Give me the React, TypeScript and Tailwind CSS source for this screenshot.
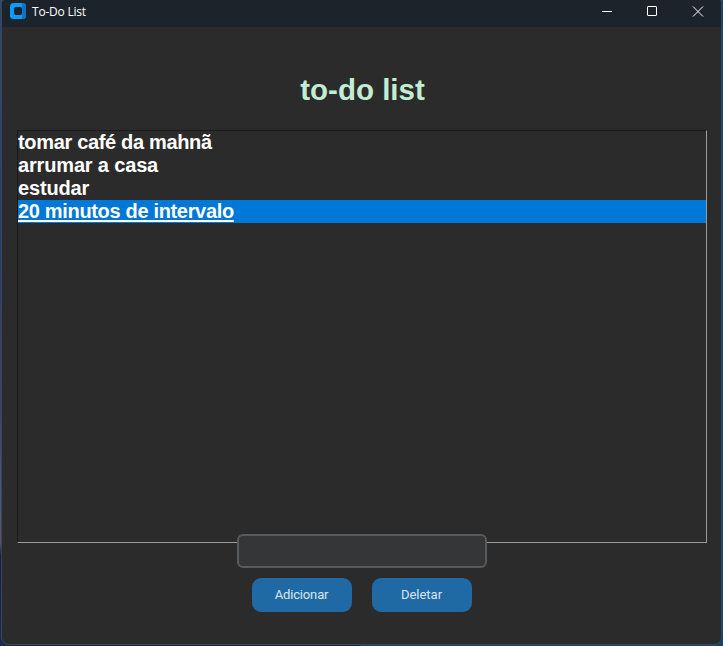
const tasks = [
  { label: "tomar café da mahnã", selected: false, spacing: "tracking-[-0.33px]" },
  { label: "arrumar a casa", selected: false, spacing: "tracking-[-0.16px]" },
  { label: "estudar", selected: false, spacing: "tracking-[-0.15px]" },
  { label: "20 minutos de intervalo", selected: true, spacing: "tracking-[-0.33px]" },
];

function TitleBar() {
  return (
    <header className="flex h-[27px] shrink-0 items-start bg-[#1c232b]">
      <svg className="mt-[3px] ml-2 shrink-0" width="16" height="16" viewBox="0 0 16 16">
        <rect width="16" height="16" rx="3.5" fill="#0a9bff" />
        <path d="M12 0h.5A3.5 3.5 0 0 1 16 3.5v9a3.5 3.5 0 0 1-3.5 3.5H12z" fill="#0874cc" />
        <rect x="4" y="4" width="8" height="8" rx="2" fill="#1c232b" />
      </svg>
      <span className="ml-[6px] pt-[3px] text-[12px] leading-[17px] tracking-[-0.22px] whitespace-nowrap text-white">To-Do List</span>
      <svg className="mr-[16px] ml-auto" width="104" height="24" viewBox="0 0 104 24" fill="none" stroke="white">
        <path d="M1 11.5h10" />
        <rect x="46.5" y="6.500" width="9" height="9" rx="0.5" />
        <path d="M92 6.500l10 10M102 6.500l-10 10" />
      </svg>
    </header>
  );
}

export default function App() {
  return (
    <div className="h-[646px] w-[723px] bg-[linear-gradient(to_right,transparent_50%,#17436a_50%),linear-gradient(to_bottom,#2c4a72_0%,#2b3c70_40%,#46406b_65%,#475c78_77%,#694d6b_84%,#171c43_86%,#1b294f_100%)] pr-px pb-px pl-px font-['Open_Sans','Noto_Sans',sans-serif]">
      <div className="flex h-[645px] flex-col overflow-hidden rounded-t-[4px] rounded-b-lg border-x border-b border-[#36475a] bg-[#2b2b2b]">
        <TitleBar />
        <main className="flex flex-col items-center px-[15px] pt-[43px]">
          <h1 className="h-[60px] pt-[1px] pl-[2px] font-['Liberation_Sans',Arial,sans-serif] text-[29.500px] leading-[38px] font-bold whitespace-nowrap text-[#c3edd2]">to-do list</h1>
          <ul className="h-[413px] w-[690px] self-start border border-t-[#191919] border-r-[#9c9c9c] border-b-[#9c9c9c] border-l-[#191919] font-['Liberation_Sans',Arial,sans-serif] text-[20px] leading-[23px] font-bold text-white">
            {tasks.map((task) => (
              <li
                key={task.label}
                className={`h-[23px] ${task.spacing} ${task.selected ? "bg-[#0078d7] underline decoration-2 underline-offset-2" : ""}`}
              >
                {task.label}
              </li>
            ))}
          </ul>
          <input className="relative -mt-[9px] h-[34px] w-[250px] rounded-md border-2 border-[#565b5e] bg-[#343638] px-2 text-white outline-none" />
          <div className="mt-[10px] flex gap-5 font-['Roboto',sans-serif] text-[13px] text-[#dce4ee]">
            <button className="h-[34px] w-[100px] rounded-[9px] bg-[#1f6aa5] tracking-[-0.15px]">Adicionar</button>
            <button className="h-[34px] w-[100px] rounded-[9px] bg-[#1f6aa5]">Deletar</button>
          </div>
        </main>
      </div>
    </div>
  );
}
